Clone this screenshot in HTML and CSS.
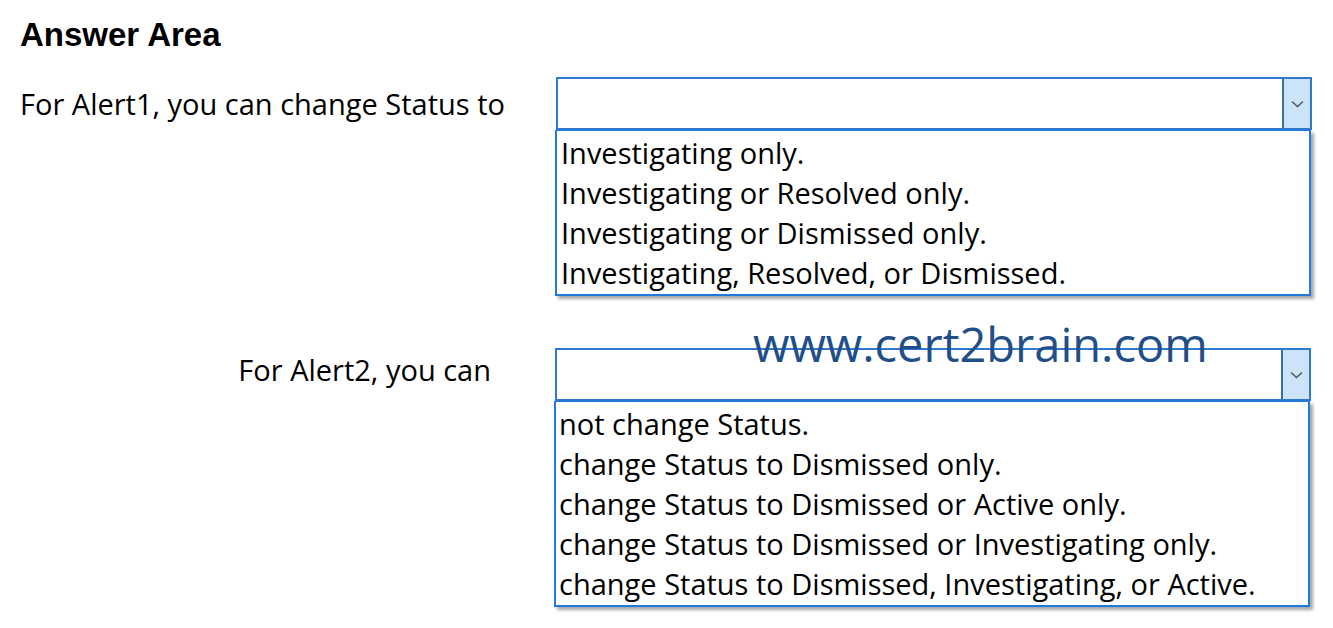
FILE: index.html
```html
<!DOCTYPE html>
<html lang="en">
<head>
    <meta charset="UTF-8">
    <meta name="viewport" content="width=device-width, initial-scale=1.0">
    <title>Answer Area</title>
    <link rel="stylesheet" href="styles.css">
</head>
<body>

    <h1 class="title">Answer Area</h1>

    <div class="row row-first">
        <div class="label">For Alert1, you can change Status to</div>
        <div class="combo">
            <div class="select">
                <span class="arrow">
                    <svg width="13" height="8" viewBox="0 0 13 8"><path d="M1 1.5 L6.5 6.5 L12 1.5" fill="none" stroke="#555" stroke-width="1.5"/></svg>
                </span>
            </div>
            <ul class="options">
                <li>Investigating only.</li>
                <li>Investigating or Resolved only.</li>
                <li>Investigating or Dismissed only.</li>
                <li>Investigating, Resolved, or Dismissed.</li>
            </ul>
        </div>
    </div>

    <div class="row row-second">
        <div class="label">For Alert2, you can</div>
        <div class="combo">
            <div class="select">
                <span class="arrow">
                    <svg width="13" height="8" viewBox="0 0 13 8"><path d="M1 1.5 L6.5 6.5 L12 1.5" fill="none" stroke="#555" stroke-width="1.5"/></svg>
                </span>
            </div>
            <ul class="options">
                <li>not change Status.</li>
                <li>change Status to Dismissed only.</li>
                <li>change Status to Dismissed or Active only.</li>
                <li>change Status to Dismissed or Investigating only.</li>
                <li>change Status to Dismissed, Investigating, or Active.</li>
            </ul>
        </div>
    </div>

    <div class="watermark">www.cert2brain.com</div>

</body>
</html>
```

FILE: styles.css
```css
body {
    margin: 0;
    padding: 0;
    background: white;
    color: black;
    font-family: "Open Sans", sans-serif;
    position: relative;
    width: 1333px;
    height: 628px;
    overflow: hidden;
}
.title {
    font-family: "Liberation Sans", Arial, sans-serif;
    font-weight: bold;
    font-size: 33px;
    margin: 0;
    padding: 16px 0 0 20px;
    height: 61px;
    box-sizing: border-box;
}
.row {
    display: flex;
    align-items: flex-start;
}
.row-first {
    padding-top: 16px;
}
.row-second {
    padding-top: 52px;
}
.label {
    font-size: 29px;
    height: 53px;
    line-height: 53px;
}
.row-first .label {
    width: 556px;
    padding-left: 20px;
    box-sizing: border-box;
}
.row-second .label {
    width: 491px;
    text-align: right;
    margin-right: 64px;
    line-height: 44px;
}
.combo {
    width: 756px;
}
.select {
    height: 53px;
    border: 2px solid #2d7ad0;
    box-sizing: border-box;
    display: flex;
    justify-content: flex-end;
}
.arrow {
    width: 26px;
    background: #cce4f7;
    border-left: 2px solid #3a6ea8;
    display: flex;
    align-items: center;
    justify-content: center;
}
.options {
    list-style: none;
    margin: 0 0 0 -1px;
    padding: 2px 0 1px 4px;
    border: 2px solid #1f7ae0;
    border-top: 1px solid #1f7ae0;
    box-shadow: 3px 3px 3px rgba(0, 0, 0, 0.35);
    font-size: 29px;
    width: 756px;
    box-sizing: border-box;
}
.options li {
    height: 40px;
    line-height: 40px;
}
.row-second .options {
    padding-left: 3px;
}
.watermark {
    position: absolute;
    left: 753px;
    top: 314px;
    font-size: 47px;
    color: #1f4e89;
    font-family: "Open Sans", sans-serif;
    line-height: 60px;
}
```
